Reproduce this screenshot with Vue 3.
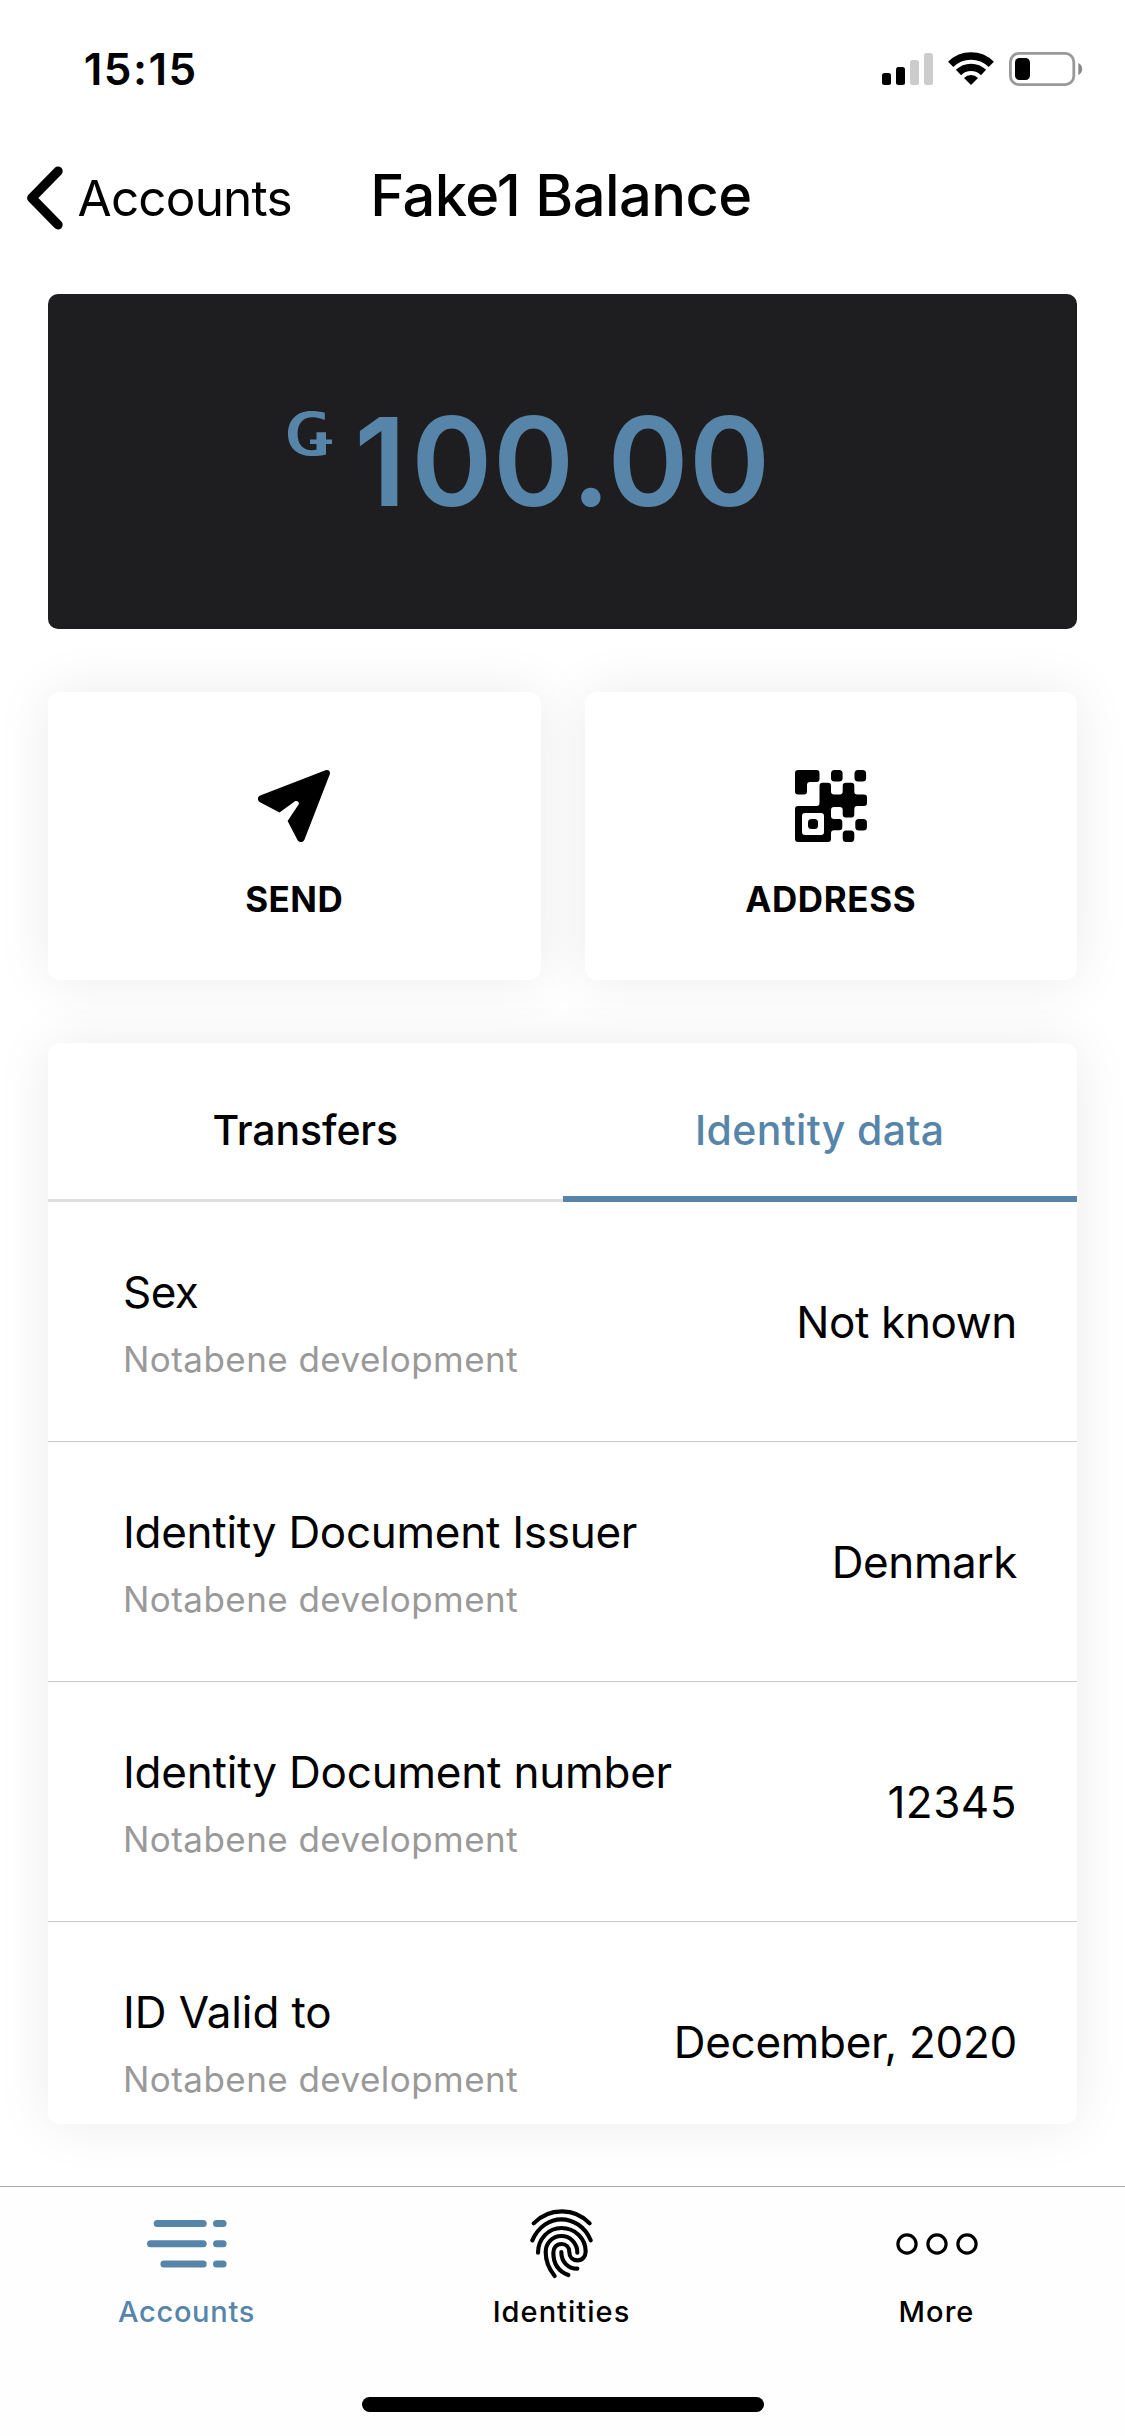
<script setup>
const rows = [
  { title: 'Sex', titleTrack: -0.6, value: 'Not known', valueTrack: -0.37 },
  { title: 'Identity Document Issuer', titleTrack: -0.27, value: 'Denmark', valueTrack: -0.4 },
  { title: 'Identity Document number', titleTrack: -0.2, value: '12345', valueTrack: 0.5 },
  { title: 'ID Valid to', titleTrack: -0.1, value: 'December, 2020', valueTrack: -0.3 },
]

// Closed path through the points, with every corner rounded.
function rounded(points, r) {
  const n = points.length
  let d = ''
  points.forEach(([x, y], i) => {
    const [px, py] = points[(i + n - 1) % n]
    const [nx, ny] = points[(i + 1) % n]
    const a = [x + Math.sign(px - x) * r, y + Math.sign(py - y) * r]
    const b = [x + Math.sign(nx - x) * r, y + Math.sign(ny - y) * r]
    d += `${i ? 'L' : 'M'}${a[0]} ${a[1]}Q${x} ${y} ${b[0]} ${b[1]}`
  })
  return d + 'Z'
}

const qrCorner = rounded([[0, 0], [24.5, 0], [24.5, 12], [12, 12], [12, 24.5], [0, 24.5]], 3)
const qrBody = rounded([
  [24.5, 12.7], [36, 12.7], [36, 24.5], [47.7, 24.5], [47.7, 12.7], [59.3, 12.7], [59.3, 24.5], [72, 24.5],
  [72, 36], [59.3, 36], [59.3, 47.5], [47.7, 47.5], [47.7, 37], [36, 37], [36, 49], [47.3, 49],
  [47.3, 60.3], [36, 60.3], [36, 72], [0, 72], [0, 36], [24.5, 36],
], 3)
const qrDots = [[36, 0], [59.5, 0], [60.3, 49], [47.7, 60.5]]
</script>

<template>
  <div class="screen">
    <header class="status">
      <span class="time">15:15</span>
      <svg class="status-icons" width="201" height="34" viewBox="0 0 201 34">
        <rect x="0" y="21" width="9" height="12" rx="2.5" />
        <rect x="14" y="15" width="9" height="18" rx="2.5" />
        <rect x="28" y="8" width="9" height="25" rx="2.5" fill="#ccc" />
        <rect x="42" y="1" width="9" height="32" rx="2.5" fill="#ccc" />
        <g fill="none" stroke="#000" stroke-width="7.4">
          <path d="M68.7 12.4A28.8 28.8 0 0 1 109.3 12.4" />
          <path d="M76.5 20.5A17.8 17.8 0 0 1 101.5 20.5" />
        </g>
        <path d="M89 33L82 26A9.9 9.9 0 0 1 96 26Z" />
        <rect x="128.4" y="1.4" width="63.4" height="31.2" rx="8.5" fill="none" stroke="#999" stroke-width="2.8" />
        <rect x="133" y="6" width="15" height="22" rx="4.5" />
        <path d="M196.3 11C201.5 13 201.5 21 196.3 23Z" fill="#888" />
      </svg>
    </header>

    <nav class="nav">
      <a class="back">
        <svg class="chevron" width="38" height="66" viewBox="0 0 38 66">
          <path d="M32 6.2L5.8 33L32 59.8" fill="none" stroke="#000" stroke-width="9.4" stroke-linecap="round" stroke-linejoin="round" />
        </svg>
        <span class="back-label">Accounts</span>
      </a>
      <h1 class="title">Fake1 Balance</h1>
    </nav>

    <main class="content">
      <section class="balance">
        <svg class="currency" width="44" height="45" viewBox="0 0 44 45">
          <path d="M36.8 1.7C33 .5 28 0 23 0C8.5 0 0 9.5 0 22.7C0 37 9.5 45 24 45C29 45 34 44.5 38 43.5V33H44V28.5H38V21.3H28.5V28.5H22V33H28.5V38.7C15.5 41 9.6 34 9.6 22.7C9.6 10.5 17 5 28 6.5C31 7 34 8 36.8 9Z" fill="currentColor" />
        </svg>
        <span class="amount"><span class="lead">1</span>00.00</span>
      </section>

      <section class="actions">
        <button class="action">
          <svg width="72" height="72" viewBox="0 0 72 72">
            <path d="M67.5 .3C70.5 -.7 72.8 1.5 71.7 4.5L46.5 69.5C45.4 72.6 41 73 39.5 70L29.6 51L40.4 34.8C41.8 32.3 39.6 30.2 37 31.3L21.5 42.4L2 32.3C-1 30.6 -.8 26.8 2.2 25.6Z" />
          </svg>
          <span class="send">SEND</span>
        </button>
        <button class="action">
          <svg width="72" height="72" viewBox="0 0 72 72">
            <path :d="qrCorner" />
            <path :d="qrBody" />
            <rect v-for="[x, y] in qrDots" :key="`${x}-${y}`" :x="x" :y="y" width="11.6" height="11.6" rx="3.5" />
            <rect x="7" y="43" width="22" height="22" rx="3" fill="#fff" />
            <rect x="13" y="49" width="10" height="10" rx="3.5" />
          </svg>
          <span class="address">ADDRESS</span>
        </button>
      </section>

      <section class="panel">
        <div class="tabs">
          <div class="tab">Transfers</div>
          <div class="tab active">Identity data</div>
        </div>
        <div v-for="row in rows" :key="row.title" class="row">
          <div>
            <div class="row-title" :style="{ letterSpacing: row.titleTrack + 'px' }">{{ row.title }}</div>
            <div class="row-sub">Notabene development</div>
          </div>
          <div class="row-value" :style="{ letterSpacing: row.valueTrack + 'px' }">{{ row.value }}</div>
        </div>
      </section>
    </main>

    <footer class="tabbar">
      <div class="items">
        <a class="item current">
          <svg width="80" height="70" viewBox="0 0 80 70" fill="currentColor">
            <rect x="6.7" y="11" width="53" height="7" rx="3.5" />
            <rect x="66" y="11" width="13.6" height="7" rx="3.5" />
            <rect x="0" y="31.2" width="59.7" height="7" rx="3.5" />
            <rect x="66" y="31.2" width="13.6" height="7" rx="3.5" />
            <rect x="13.4" y="51.4" width="46.3" height="7" rx="3.5" />
            <rect x="66" y="51.4" width="13.6" height="7" rx="3.5" />
          </svg>
          <span class="item-accounts">Accounts</span>
        </a>
        <a class="item">
          <svg width="64" height="70" viewBox="180 87 192 210" fill="none" stroke="#000" stroke-width="12.4" stroke-linecap="round">
            <path d="M191 130C237 82 314 82 359 130" />
            <path d="M187 181C205 139 240 118 274 118S345 139 362 181" />
            <path d="M204 218C204 176 236 144 274 144C316 144 347 176 347 214C347 230 337 241 322 241C308 241 298 231 298 216C298 202 288 192 274 192C260 192 250 203 250 218C250 250 266 274 295 285" />
            <path d="M254 288C236 266 227 242 227 216C227 189 248 168 274 168C301 168 322 190 322 218" />
            <path d="M274 216C274 246 294 266 322 266" />
          </svg>
          <span class="item-label">Identities</span>
        </a>
        <a class="item">
          <svg width="82" height="70" viewBox="0 0 82 70" fill="none" stroke="#000" stroke-width="3.2">
            <circle cx="11" cy="35" r="9.1" />
            <circle cx="41" cy="35" r="9.1" />
            <circle cx="71" cy="35" r="9.1" />
          </svg>
          <span class="item-label">More</span>
        </a>
      </div>
      <div class="home"></div>
    </footer>
  </div>
</template>

<style>
body {
  margin: 0;
  background: #fff;
}
</style>

<style scoped>
.screen {
  display: flex;
  flex-direction: column;
  width: 1125px;
  height: 2436px;
  overflow: hidden;
  background: #fff;
  color: #000;
  font-family: Inter, "Liberation Sans", sans-serif;
}
svg {
  display: block;
  flex: none;
}
.status {
  display: flex;
  justify-content: space-between;
  box-sizing: border-box;
  height: 132px;
  padding: 42px 42px 0 83.7px;
}
.time {
  font-size: 44px;
  line-height: 54px;
  font-weight: 600;
  letter-spacing: 1.5px;
}
.status-icons {
  margin-top: 10px;
}
.nav {
  display: flex;
  align-items: flex-start;
  height: 132px;
}
.back {
  display: flex;
  align-items: flex-start;
  gap: 13.6px;
  width: 344.3px;
  padding-left: 26px;
}
.chevron {
  margin-top: 33px;
}
.back-label {
  margin-top: 36px;
  font-size: 49.5px;
  line-height: 60px;
  letter-spacing: -0.83px;
}
.title {
  margin: 28px 0 0;
  font-size: 57.8px;
  line-height: 70px;
  font-weight: 500;
  letter-spacing: -0.52px;
}
.content {
  flex: 1;
  padding: 30px 48px 0;
}
.balance {
  display: flex;
  align-items: flex-start;
  gap: 22.3px;
  box-sizing: border-box;
  height: 335px;
  padding-left: 240px;
  border-radius: 10px;
  background: #1e1e20;
  color: #5685a9;
}
.currency {
  margin-top: 117px;
}
.amount {
  margin-top: 93px;
  font-size: 123px;
  line-height: 149px;
  font-weight: 600;
  letter-spacing: 0.5px;
}
.lead {
  letter-spacing: 5px;
}
.actions {
  display: grid;
  grid-template-columns: 1fr 1fr;
  gap: 44px;
  margin-top: 63px;
}
.action {
  display: flex;
  flex-direction: column;
  align-items: center;
  gap: 36px;
  height: 288px;
  padding: 78px 0 0;
  border: 0;
  border-radius: 12px;
  background: #fff;
  box-shadow: 0 0 56px rgba(0, 0, 0, 0.08);
  color: #000;
  font-family: inherit;
  font-size: 35px;
  line-height: 42px;
  font-weight: 700;
}
.send {
  letter-spacing: 0.5px;
}
.address {
  letter-spacing: 0.6px;
}
.panel {
  height: 1081px;
  margin-top: 63px;
  overflow: hidden;
  border-radius: 12px;
  background: #fff;
  box-shadow: 0 0 56px rgba(0, 0, 0, 0.08);
}
.tabs {
  display: flex;
  height: 159px;
}
.tab {
  flex: 1;
  box-sizing: border-box;
  padding-top: 62px;
  border-bottom: 3px solid #e0e0e0;
  font-size: 41px;
  line-height: 50px;
  font-weight: 500;
  letter-spacing: -0.1px;
  text-align: center;
}
.tab.active {
  border-bottom: 6px solid #5685a9;
  color: #5685a9;
  letter-spacing: 0.35px;
}
.row {
  display: flex;
  justify-content: space-between;
  box-sizing: border-box;
  height: 240px;
  padding: 63px 60px 0 75px;
  border-bottom: 1px solid #c8c8c8;
}
.row-title,
.row-value {
  font-size: 44px;
  line-height: 54px;
}
.row-value {
  margin-top: 30px;
}
.row-sub {
  margin-top: 19px;
  color: #999;
  font-size: 35px;
  line-height: 42px;
  letter-spacing: 0.45px;
}
.tabbar {
  box-sizing: border-box;
  height: 250px;
  border-top: 1px solid #a8a8aa;
  background: #fefefe;
}
.items {
  display: flex;
  height: 210px;
}
.item {
  display: flex;
  flex: 1;
  flex-direction: column;
  align-items: center;
  gap: 15px;
  padding: 22px 2px 0 0;
  font-size: 29px;
  line-height: 35px;
  font-weight: 500;
}
.item-accounts {
  letter-spacing: 0.7px;
}
.item-label {
  letter-spacing: 1.03px;
}
.current {
  color: #5685a9;
}
.home {
  width: 402px;
  height: 15px;
  margin: 0 auto;
  border-radius: 8px;
  background: #000;
}
</style>
